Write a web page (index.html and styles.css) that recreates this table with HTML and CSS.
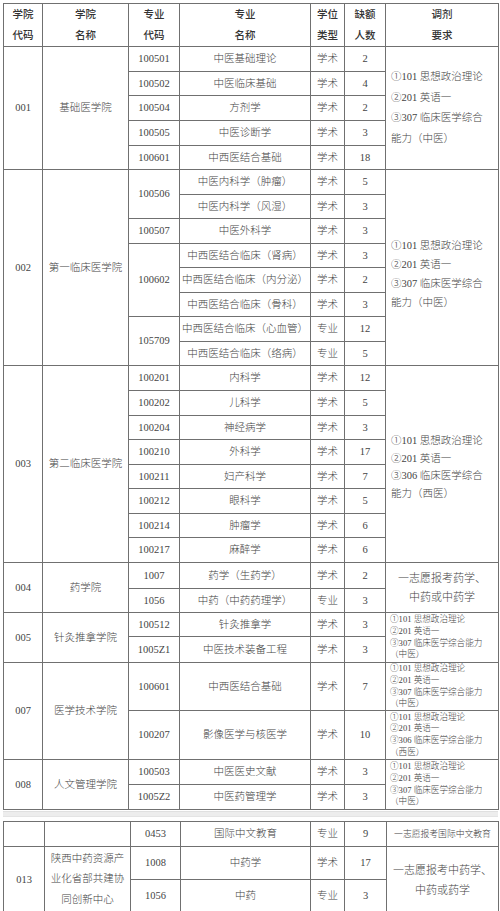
FILE: index.html
```html
<!DOCTYPE html>
<html lang="zh">
<head>
<meta charset="utf-8">
<link rel="stylesheet" href="styles.css">
</head>
<body>
<div class="page">
<table class="grid t1">
<colgroup><col class="c1"><col class="c2"><col class="c3"><col class="c4"><col class="c5"><col class="c6"><col class="c7"></colgroup>
<tr class="head"><th>学院<br>代码</th><th>学院<br>名称</th><th>专业<br>代码</th><th>专业<br>名称</th><th>学位<br>类型</th><th>缺额<br>人数</th><th>调剂<br>要求</th></tr>

<tr class="h25"><td rowspan="5">001</td><td rowspan="5">基础医学院</td><td>100501</td><td>中医基础理论</td><td>学术</td><td>2</td><td rowspan="5" class="req">①101 思想政治理论<br>②201 英语一<br>③307 临床医学综合<br>能力（中医）</td></tr>
<tr class="h24"><td>100502</td><td>中医临床基础</td><td>学术</td><td>4</td></tr>
<tr class="h25"><td>100504</td><td>方剂学</td><td>学术</td><td>2</td></tr>
<tr class="h25"><td>100505</td><td>中医诊断学</td><td>学术</td><td>3</td></tr>
<tr class="h24"><td>100601</td><td>中西医结合基础</td><td>学术</td><td>18</td></tr>

<tr class="h25"><td rowspan="8">002</td><td rowspan="8">第一临床医学院</td><td rowspan="2">100506</td><td>中医内科学（肿瘤）</td><td>学术</td><td>5</td><td rowspan="8" class="req low">①101 思想政治理论<br>②201 英语一<br>③307 临床医学综合<br>能力（中医）</td></tr>
<tr class="h24"><td>中医内科学（风湿）</td><td>学术</td><td>3</td></tr>
<tr class="h25"><td>100507</td><td>中医外科学</td><td>学术</td><td>3</td></tr>
<tr class="h24"><td rowspan="3">100602</td><td>中西医结合临床（肾病）</td><td>学术</td><td>3</td></tr>
<tr class="h25"><td>中西医结合临床（内分泌）</td><td>学术</td><td>2</td></tr>
<tr class="h24"><td>中西医结合临床（骨科）</td><td>学术</td><td>3</td></tr>
<tr class="h25"><td rowspan="2">105709</td><td>中西医结合临床（心血管）</td><td>专业</td><td>12</td></tr>
<tr class="h24"><td>中西医结合临床（络病）</td><td>专业</td><td>5</td></tr>

<tr class="h25"><td rowspan="8">003</td><td rowspan="8">第二临床医学院</td><td>100201</td><td>内科学</td><td>学术</td><td>12</td><td rowspan="8" class="req tight">①101 思想政治理论<br>②201 英语一<br>③306 临床医学综合<br>能力（西医）</td></tr>
<tr class="h25"><td>100202</td><td>儿科学</td><td>学术</td><td>5</td></tr>
<tr class="h24"><td>100204</td><td>神经病学</td><td>学术</td><td>3</td></tr>
<tr class="h25"><td>100210</td><td>外科学</td><td>学术</td><td>17</td></tr>
<tr class="h24"><td>100211</td><td>妇产科学</td><td>学术</td><td>7</td></tr>
<tr class="h25"><td>100212</td><td>眼科学</td><td>学术</td><td>5</td></tr>
<tr class="h24"><td>100214</td><td>肿瘤学</td><td>学术</td><td>6</td></tr>
<tr class="h25"><td>100217</td><td>麻醉学</td><td>学术</td><td>6</td></tr>

<tr class="h26"><td rowspan="2">004</td><td rowspan="2">药学院</td><td>1007</td><td>药学（生药学）</td><td>学术</td><td>2</td><td rowspan="2" class="note">一志愿报考药学、<br>中药或中药学</td></tr>
<tr class="h24"><td>1056</td><td>中药（中药药理学）</td><td>专业</td><td>3</td></tr>

<tr class="h24"><td rowspan="2">005</td><td rowspan="2">针灸推拿学院</td><td>100512</td><td>针灸推拿学</td><td>学术</td><td>3</td><td rowspan="2" class="small">①101 思想政治理论<br>②201 英语一<br>③307 临床医学综合能力<br>（中医）</td></tr>
<tr class="h26"><td>1005Z1</td><td>中医技术装备工程</td><td>学术</td><td>3</td></tr>

<tr class="h48"><td rowspan="2">007</td><td rowspan="2">医学技术学院</td><td>100601</td><td>中西医结合基础</td><td>学术</td><td>7</td><td class="small">①101 思想政治理论<br>②201 英语一<br>③307 临床医学综合能力<br>（中医）</td></tr>
<tr class="h49"><td>100207</td><td>影像医学与核医学</td><td>学术</td><td>10</td><td class="small">①101 思想政治理论<br>②201 英语一<br>③306 临床医学综合能力<br>（西医）</td></tr>

<tr class="h25"><td rowspan="2">008</td><td rowspan="2">人文管理学院</td><td>100503</td><td>中医医史文献</td><td>学术</td><td>3</td><td rowspan="2" class="small">①101 思想政治理论<br>②201 英语一<br>③307 临床医学综合能力<br>（中医）</td></tr>
<tr class="h25"><td>1005Z2</td><td>中医药管理学</td><td>学术</td><td>3</td></tr>
</table>

<div class="gap"><div class="band"></div></div>

<table class="grid t2">
<colgroup><col class="d1"><col class="d2"><col class="d3"><col class="d4"><col class="d5"><col class="d6"><col class="d7"></colgroup>
<tr class="h25"><td></td><td></td><td>0453</td><td>国际中文教育</td><td>专业</td><td>9</td><td class="tiny">一志愿报考国际中文教育</td></tr>
<tr class="h33"><td rowspan="2">013</td><td rowspan="2" class="wrap">陕西中药资源产<br>业化省部共建协<br>同创新中心</td><td>1008</td><td>中药学</td><td>学术</td><td>17</td><td rowspan="2" class="note big">一志愿报考中药学、<br>中药或药学</td></tr>
<tr class="h33"><td>1056</td><td>中药</td><td>专业</td><td>3</td></tr>
</table>
</div>
</body>
</html>
```

FILE: styles.css
```css
html, body {
  margin: 0;
  padding: 0;
  background: #ffffff;
}

.page {
  padding: 3px 0 0 3px;
  width: 495px;
  font-family: "Liberation Serif", "Noto Sans CJK SC", serif;
  font-weight: 300;
  color: #444444;
}

.grid {
  border-collapse: collapse;
  table-layout: fixed;
  width: 495px;
  font-size: 10.5px;
}

.grid td, .grid th {
  border: 1px solid #707070;
  padding: 0 1px;
  text-align: center;
  vertical-align: middle;
  white-space: nowrap;
  line-height: 14px;
  overflow: hidden;
}

.c1 { width: 39px; }
.c2 { width: 86px; }
.c3 { width: 51px; }
.c4 { width: 131px; }
.c5 { width: 34px; }
.c6 { width: 41px; }
.c7 { width: 113px; }

.d1 { width: 41px; }
.d2 { width: 86px; }
.d3 { width: 50px; }
.d4 { width: 130px; }
.d5 { width: 34px; }
.d6 { width: 42px; }
.d7 { width: 112px; }

.head { height: 42px; }
.grid th {
  font-weight: 500;
  line-height: 21px;
  color: #333;
}

.h24 { height: 24px; }
.h25 { height: 25px; }
.h26 { height: 26px; }
.h33 { height: 33px; }
.h48 { height: 48px; }
.h49 { height: 49px; }

.grid td.req {
  text-align: left;
  padding: 0 3px 0 5px;
  line-height: 20.5px;
}
.grid td.req.low {
  line-height: 19px;
  padding-top: 12px;
}
.grid td.req.tight {
  line-height: 17.5px;
  padding-top: 6px;
}

.grid td.note {
  line-height: 19px;
  font-size: 11px;
}
.grid td.note.big {
  line-height: 20px;
  font-size: 11px;
}

.grid td.small {
  text-align: left;
  font-size: 8.6px;
  line-height: 11.6px;
  padding: 0 2px 0 4px;
}

.grid td.tiny {
  font-size: 8.8px;
}

.grid td.wrap {
  line-height: 20.5px;
}

.gap {
  height: 11px;
  padding-top: 1px;
  box-sizing: border-box;
}
.band {
  height: 4px;
  background: #ededed;
  border-top: 1px solid #e0e0e0;
  border-bottom: 1px solid #e4e4e4;
}
```
